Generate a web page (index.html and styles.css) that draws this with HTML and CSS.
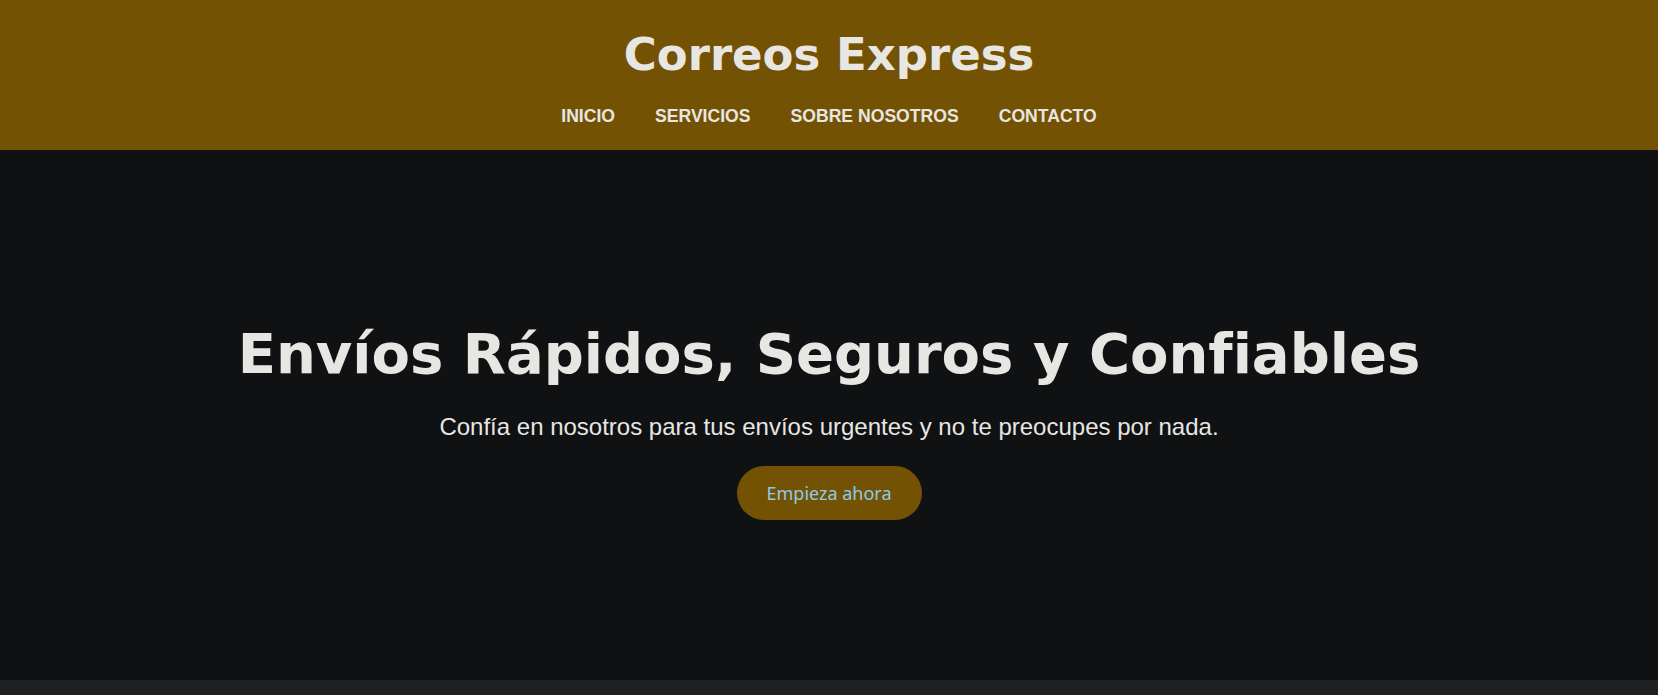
FILE: index.html
```html
<!DOCTYPE html>
<html lang="es">
<head>
<meta charset="utf-8">
<title>Correos Express</title>
<link rel="stylesheet" href="styles.css">
</head>
<body>
<header class="site-header">
  <h1 class="brand">Correos Express</h1>
  <nav class="nav">
    <a href="#" class="nav-link">INICIO</a>
    <a href="#" class="nav-link">SERVICIOS</a>
    <a href="#" class="nav-link">SOBRE NOSOTROS</a>
    <a href="#" class="nav-link">CONTACTO</a>
  </nav>
</header>
<section class="hero">
  <h2 class="hero-title">Envíos Rápidos, Seguros y Confiables</h2>
  <p class="hero-text">Confía en nosotros para tus envíos urgentes y no te preocupes por nada.</p>
  <button class="cta">Empieza ahora</button>
</section>
<footer class="site-footer"></footer>
</body>
</html>
```

FILE: styles.css
```css
* { box-sizing: border-box; }
html, body { margin: 0; padding: 0; }
body {
  background: #1f2022;
  color: #e8e6e3;
  font-family: "Liberation Sans", Arial, sans-serif;
}
.site-header {
  background: #745203;
  height: 150px;
  display: flex;
  flex-direction: column;
  align-items: center;
  padding-top: 27px;
}
.brand {
  margin: 0;
  font-family: "DejaVu Sans", sans-serif;
  font-weight: bold;
  font-size: 45px;
  line-height: 56px;
  color: #e8e6e3;
}
.nav {
  display: flex;
  gap: 40px;
  margin-top: 22px;
}
.nav-link {
  color: #e8e6e3;
  text-decoration: none;
  font-weight: bold;
  font-size: 17.6px;
  line-height: 22px;
}
.hero {
  background: #0f1113;
  height: 530px;
  padding-top: 10px;
  display: flex;
  flex-direction: column;
  align-items: center;
  justify-content: center;
  text-align: center;
}
.hero-title {
  margin: 0;
  font-family: "DejaVu Sans", sans-serif;
  font-weight: bold;
  font-size: 56px;
  line-height: 68px;
  color: #e8e6e3;
}
.hero-text {
  margin: 25px 0 0;
  font-size: 24px;
  line-height: 28px;
}
.cta {
  margin-top: 25px;
  background: #745203;
  color: #8ecae6;
  border: none;
  border-radius: 27px;
  width: 185px;
  height: 54px;
  font-family: system-ui, sans-serif;
  font-size: 18px;
  cursor: pointer;
}
.site-footer {
  height: 15px;
  background: #1f2022;
}
```
